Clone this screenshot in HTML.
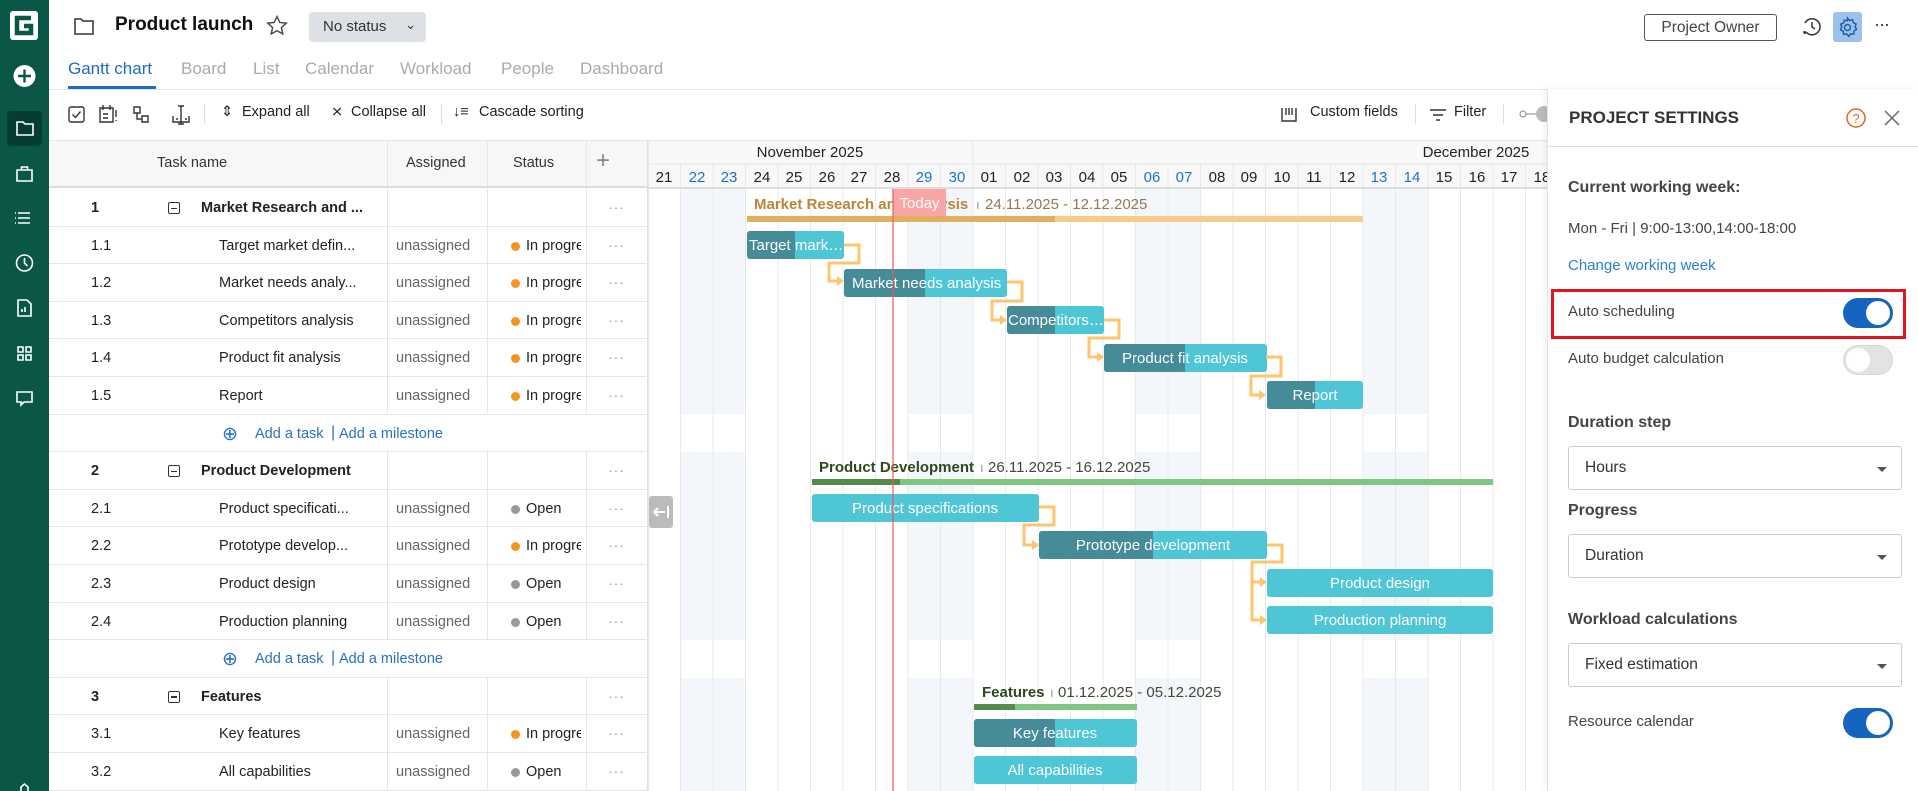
<!DOCTYPE html>
<html><head><meta charset="utf-8">
<style>
*{box-sizing:border-box;margin:0;padding:0}
body{width:1918px;height:791px;overflow:hidden;position:relative;background:#fff;font-family:"Liberation Sans",sans-serif;color:#222}
.a{position:absolute}
.sb{left:0;top:0;width:49px;height:791px;background:#0a5747}
.tab{top:59px;font-size:17px;color:#aaa}
.tb{top:104px;font-size:14.5px;color:#222}
.row{position:absolute;left:49px;width:599px;height:37.6px;border-bottom:1px solid #e6e6e6;font-size:14.5px}
.row span{position:absolute;top:11px;white-space:nowrap}
.cl{position:absolute;top:0;height:100%;width:1px;background:#e6e6e6}
.num{left:42px}
.nm{left:170px}
.gn{left:152px;font-weight:bold}
.as{left:347px;color:#666}
.dot{width:9px;height:9px;border-radius:50%;top:15px!important}
.st{left:477px;width:55px;overflow:hidden}
.dd{left:559px;color:#999;letter-spacing:1px;top:10px!important;font-size:14px}
.bx{left:119px;top:13px!important;width:12px;height:12px;border:1.3px solid #333;border-radius:2px}
.bx:after{content:"";position:absolute;left:2px;top:4.5px;width:6px;height:1.3px;background:#333}
.add{color:#2770c8}
.pl{font-size:15px;color:#444}
.lbl{font-weight:bold;font-size:16px;color:#444}
.sel{left:1568px;width:334px;height:44px;border:1px solid #ccc;border-radius:3px;font-size:15.5px;color:#333;padding:12px 16px}
.sel:after{content:"";position:absolute;right:14px;top:20px;border-left:5px solid transparent;border-right:5px solid transparent;border-top:5px solid #555}
.tg{width:50px;height:30px;border-radius:15px;left:1843px}
.tg i{position:absolute;top:3px;width:24px;height:24px;border-radius:50%;background:#fff}
</style></head><body>

<svg class="a" style="left:0;top:0" width="1918" height="791" font-family="Liberation Sans, sans-serif">
<rect x="648" y="140" width="900" height="48" fill="#f8f8f8"/>
<g fill="#f3f7fb">
<rect x="680.5" y="189" width="65" height="225"/><rect x="908" y="189" width="65" height="225"/><rect x="1135.5" y="189" width="65" height="225"/><rect x="1363" y="189" width="65" height="225"/>
<rect x="680.5" y="452" width="65" height="188"/><rect x="908" y="452" width="65" height="188"/><rect x="1135.5" y="452" width="65" height="188"/><rect x="1363" y="452" width="65" height="188"/>
<rect x="680.5" y="678" width="65" height="113"/><rect x="908" y="678" width="65" height="113"/><rect x="1135.5" y="678" width="65" height="113"/><rect x="1363" y="678" width="65" height="113"/>
</g>
<line x1="648" y1="164" x2="1548" y2="164" stroke="#e6e6e6"/>
<line x1="973" y1="140" x2="973" y2="164" stroke="#e6e6e6"/>
<g stroke="#e8e8e8" stroke-width="1">
<line x1="648.5" y1="140" x2="648.5" y2="791"/><line x1="680.5" y1="164" x2="680.5" y2="791"/><line x1="713" y1="164" x2="713" y2="791"/><line x1="745.5" y1="164" x2="745.5" y2="791"/><line x1="778" y1="164" x2="778" y2="791"/><line x1="810.5" y1="164" x2="810.5" y2="791"/><line x1="843" y1="164" x2="843" y2="791"/><line x1="875.5" y1="164" x2="875.5" y2="791"/><line x1="908" y1="164" x2="908" y2="791"/><line x1="940.5" y1="164" x2="940.5" y2="791"/><line x1="973" y1="164" x2="973" y2="791"/><line x1="1005.5" y1="164" x2="1005.5" y2="791"/><line x1="1038" y1="164" x2="1038" y2="791"/><line x1="1070.5" y1="164" x2="1070.5" y2="791"/><line x1="1103" y1="164" x2="1103" y2="791"/><line x1="1135.5" y1="164" x2="1135.5" y2="791"/><line x1="1168" y1="164" x2="1168" y2="791"/><line x1="1200.5" y1="164" x2="1200.5" y2="791"/><line x1="1233" y1="164" x2="1233" y2="791"/><line x1="1265.5" y1="164" x2="1265.5" y2="791"/><line x1="1298" y1="164" x2="1298" y2="791"/><line x1="1330.5" y1="164" x2="1330.5" y2="791"/><line x1="1363" y1="164" x2="1363" y2="791"/><line x1="1395.5" y1="164" x2="1395.5" y2="791"/><line x1="1428" y1="164" x2="1428" y2="791"/><line x1="1460.5" y1="164" x2="1460.5" y2="791"/><line x1="1493" y1="164" x2="1493" y2="791"/><line x1="1525.5" y1="164" x2="1525.5" y2="791"/>
</g>
<line x1="648" y1="188" x2="1548" y2="188" stroke="#ddd" stroke-width="2"/>
<text x="810" y="157" font-size="15" text-anchor="middle" fill="#222">November 2025</text>
<text x="1476" y="157" font-size="15" text-anchor="middle" fill="#222">December 2025</text>
<g font-size="15" text-anchor="middle" fill="#222">
<text x="664" y="182">21</text><text x="697" y="182" fill="#1f6fd0">22</text><text x="729" y="182" fill="#1f6fd0">23</text><text x="762" y="182">24</text><text x="794" y="182">25</text><text x="827" y="182">26</text><text x="859" y="182">27</text><text x="892" y="182">28</text><text x="924" y="182" fill="#1f6fd0">29</text><text x="957" y="182" fill="#1f6fd0">30</text><text x="989" y="182">01</text><text x="1022" y="182">02</text><text x="1054" y="182">03</text><text x="1087" y="182">04</text><text x="1119" y="182">05</text><text x="1152" y="182" fill="#1f6fd0">06</text><text x="1184" y="182" fill="#1f6fd0">07</text><text x="1217" y="182">08</text><text x="1249" y="182">09</text><text x="1282" y="182">10</text><text x="1314" y="182">11</text><text x="1347" y="182">12</text><text x="1379" y="182" fill="#1f6fd0">13</text><text x="1412" y="182" fill="#1f6fd0">14</text><text x="1444" y="182">15</text><text x="1477" y="182">16</text><text x="1509" y="182">17</text><text x="1542" y="182">18</text>
</g>

<text x="754" y="209" font-size="15" font-weight="bold" fill="#b8863b">Market Research and analysis</text>
<text x="976" y="209" font-size="13" fill="#999">ı</text>
<text x="985" y="209" font-size="15" fill="#8f7a55">24.11.2025 - 12.12.2025</text>
<rect x="747" y="216" width="616" height="6" fill="#f8cc88"/>
<rect x="747" y="216" width="308" height="6" fill="#e0b060"/>
<rect x="893" y="189" width="53" height="27" fill="#f9a5a5"/>
<text x="919.5" y="208" font-size="15" text-anchor="middle" fill="#fff">Today</text>

<g font-size="15" fill="#fff">
<rect x="747" y="231" width="97" height="28" rx="3" fill="#4fc6d6"/><path d="M750 231h45v28h-45a3 3 0 0 1-3-3v-22a3 3 0 0 1 3-3z" fill="#458b98"/>
<text x="749" y="250">Target mark…</text>
<rect x="844" y="269" width="163" height="28" rx="3" fill="#4fc6d6"/><path d="M847 269h78v28h-78a3 3 0 0 1-3-3v-22a3 3 0 0 1 3-3z" fill="#458b98"/>
<text x="852" y="288">Market needs analysis</text>
<rect x="1007" y="306" width="97" height="28" rx="3" fill="#4fc6d6"/><path d="M1010 306h45v28h-45a3 3 0 0 1-3-3v-22a3 3 0 0 1 3-3z" fill="#458b98"/>
<text x="1008" y="325">Competitors…</text>
<rect x="1104" y="344" width="163" height="28" rx="3" fill="#4fc6d6"/><path d="M1107 344h78v28h-78a3 3 0 0 1-3-3v-22a3 3 0 0 1 3-3z" fill="#458b98"/>
<text x="1185" y="363" text-anchor="middle">Product fit analysis</text>
<rect x="1267" y="381" width="96" height="28" rx="3" fill="#4fc6d6"/><path d="M1270 381h45v28h-45a3 3 0 0 1-3-3v-22a3 3 0 0 1 3-3z" fill="#458b98"/>
<text x="1315" y="400" text-anchor="middle">Report</text>
</g>

<text x="819" y="472" font-size="15" font-weight="bold" fill="#2b4a1a">Product Development</text>
<text x="980" y="472" font-size="13" fill="#999">ı</text>
<text x="988" y="472" font-size="15" fill="#3b4b35">26.11.2025 - 16.12.2025</text>
<rect x="812" y="479" width="681" height="6" fill="#80c683"/>
<rect x="812" y="479" width="88" height="6" fill="#558b4a"/>
<g font-size="15" fill="#fff">
<rect x="812" y="494" width="227" height="28" rx="3" fill="#4fc6d6"/>
<text x="925" y="513" text-anchor="middle">Product specifications</text>
<rect x="1039" y="531" width="228" height="28" rx="3" fill="#4fc6d6"/><path d="M1042 531h111v28h-111a3 3 0 0 1-3-3v-22a3 3 0 0 1 3-3z" fill="#458b98"/>
<text x="1153" y="550" text-anchor="middle">Prototype development</text>
<rect x="1267" y="569" width="226" height="28" rx="3" fill="#4fc6d6"/>
<text x="1380" y="588" text-anchor="middle">Product design</text>
<rect x="1267" y="606" width="226" height="28" rx="3" fill="#4fc6d6"/>
<text x="1380" y="625" text-anchor="middle">Production planning</text>
</g>

<text x="982" y="697" font-size="15" font-weight="bold" fill="#2b4a1a">Features</text>
<text x="1050" y="697" font-size="13" fill="#999">ı</text>
<text x="1058" y="697" font-size="15" fill="#3b4b35">01.12.2025 - 05.12.2025</text>
<rect x="974" y="704" width="163" height="6" fill="#80c683"/>
<rect x="974" y="704" width="41" height="6" fill="#558b4a"/>
<g font-size="15" fill="#fff">
<rect x="974" y="719" width="163" height="28" rx="3" fill="#4fc6d6"/><path d="M977 719h78v28h-78a3 3 0 0 1-3-3v-22a3 3 0 0 1 3-3z" fill="#458b98"/>
<text x="1055" y="738" text-anchor="middle">Key features</text>
<rect x="974" y="756" width="163" height="28" rx="3" fill="#4fc6d6"/>
<text x="1055" y="775" text-anchor="middle">All capabilities</text>
</g>

<g fill="none" stroke="#ffc56e" stroke-width="3">
<path d="M844 245H859V263H829V281H838"/>
<path d="M1007 282H1022V301H992V320H1001"/>
<path d="M1104 320H1119V338H1089V357H1098"/>
<path d="M1266 357H1281V376H1251V395H1260"/>
<path d="M1039 507H1054V525H1024V545H1033"/>
<path d="M1267 545H1282V562H1252V620H1261M1252 582H1261"/>
</g>
<g fill="#ffc56e">
<path d="M837 276l7 5-7 5z"/><path d="M1000 315l7 5-7 5z"/><path d="M1097 352l7 5-7 5z"/><path d="M1259 390l7 5-7 5z"/><path d="M1032 540l7 5-7 5z"/><path d="M1260 577l7 5-7 5z"/><path d="M1260 615l7 5-7 5z"/>
</g>
<line x1="893" y1="189" x2="893" y2="791" stroke="#e85a5a" stroke-width="1.2"/>
<rect x="649" y="496" width="24" height="32" rx="3" fill="#bbb"/>
<path d="M654 512h11M654 512l4-4M654 512l4 4M668 506v12" stroke="#fff" stroke-width="2" fill="none"/>
</svg>

<div class="a sb"></div>
<svg class="a" style="left:0;top:0" width="49" height="791" fill="none" stroke="#fff" stroke-width="1.6">
<rect x="10" y="11" width="28" height="29" rx="3" fill="#fff" stroke="none"/>
<path d="M31 18H17V33H31V26H24" stroke="#0a5747" stroke-width="4.5" fill="none"/>
<circle cx="24.5" cy="76" r="11" fill="#fff" stroke="none"/>
<path d="M24.5 69.5v13M18 76h13" stroke="#0a5747" stroke-width="2.4"/>
<rect x="7" y="111" width="35" height="35" rx="4" fill="#063d33" stroke="none"/>
<path d="M17 122h6l2 2h8v11H17z"/>
<path d="M17 170h15v11H17zM21.5 170v-3h6v3"/>
<path d="M18 213h12M18 218h12M18 223h12M15 213h1M15 218h1M15 223h1"/>
<circle cx="24.5" cy="263" r="8"/><path d="M24.5 258v5l3 3"/>
<path d="M18 300h9l4 4v12H18zM22 312v-3M25 312v-5"/>
<path d="M18 347h5v5h-5zM26 347h5v5h-5zM18 355h5v5h-5zM26 355h5v5h-5z"/>
<path d="M17 392h15v10h-8l-3 3v-3h-4z"/>
<path d="M21 791v-4l3.5-3 3.5 3v4"/>
</svg>

<svg class="a" style="left:74px;top:17px" width="20" height="18" fill="none" stroke="#333" stroke-width="1.5"><path d="M1 2h6l2 2h10v13H1z"/></svg>
<div class="a" style="left:115px;top:14px;font-size:19px;font-weight:bold;color:#111">Product launch</div>
<svg class="a" style="left:266px;top:15px" width="22" height="22" fill="none" stroke="#444" stroke-width="1.4"><path d="M11 1.5l2.8 6 6.5.7-4.9 4.4 1.4 6.4L11 15.7 5.2 19l1.4-6.4L1.7 8.2l6.5-.7z"/></svg>
<div class="a" style="left:309px;top:12px;width:117px;height:30px;background:#dde0e5;border-radius:4px;font-size:15px;color:#333;padding:6px 14px">No status<span style="position:absolute;right:10px;top:5px;font-size:13px">&#8964;</span></div>
<div class="a" style="left:1644px;top:14px;width:133px;height:27px;border:1px solid #555;border-radius:3px;font-size:15.5px;color:#444;text-align:center;line-height:25px">Project Owner</div>
<svg class="a" style="left:1800px;top:15px" width="24" height="24" fill="none" stroke="#333" stroke-width="1.5"><path d="M6 17a8 8 0 1 0-1-9M6 17l-2 2M6 17h-3"/><path d="M12 7v5l3 2"/></svg>
<div class="a" style="left:1833px;top:12px;width:29px;height:30px;background:#9cc2ea;border-radius:3px"></div>
<svg class="a" style="left:1836px;top:16px" width="23" height="23" fill="none" stroke="#1d5fae" stroke-width="1.5"><circle cx="11.5" cy="11.5" r="3"/><path d="M11.5 2l2 2.5 3-.8.8 3 2.8 1.3-1 2.8 1.5 2.6-2.6 1.5-.2 3.2-3.1-.3-1.9 2.5-2-2.4-3.1.4-.5-3.1-2.7-1.4 1.3-2.8-1.1-2.9 2.9-1 .8-3 3 .6z"/></svg>
<div class="a" style="left:1874px;top:14px;font-size:18px;color:#333;letter-spacing:-1px">···</div>

<div class="a tab" style="left:68px;color:#1d6bc6">Gantt chart</div>
<div class="a" style="left:68px;top:86px;width:88px;height:3px;background:#1d6bc6"></div>
<div class="a tab" style="left:181px">Board</div>
<div class="a tab" style="left:253px">List</div>
<div class="a tab" style="left:305px">Calendar</div>
<div class="a tab" style="left:400px">Workload</div>
<div class="a tab" style="left:501px">People</div>
<div class="a tab" style="left:580px">Dashboard</div>
<div class="a" style="left:49px;top:89px;width:1869px;height:1px;background:#e6e6e6"></div>

<svg class="a" style="left:60px;top:102px" width="160" height="26" fill="none" stroke="#333" stroke-width="1.4">
<rect x="9" y="5" width="15" height="15" rx="2"/><path d="M12.5 12.5l3 3 5-6"/>
<path d="M40 6h13v14H40zM43 3v5M50 3v5M43 12h5M43 16h5M56 8v7M56 18v1"/>
<path d="M74 5h6v6h-6zM82 14h6v6h-6zM77 11v6h5"/>
<path d="M113 14v6h16v-6M121 4v18M118 4h6M118 22h6M116 17h2M125 17h2"/>
</svg>
<div class="a" style="left:204px;top:104px;width:1px;height:20px;background:#ddd"></div>
<div class="a tb" style="left:221px">&#8661;</div>
<div class="a tb" style="left:242px">Expand all</div>
<div class="a tb" style="left:331px">&#10799;</div>
<div class="a tb" style="left:351px">Collapse all</div>
<div class="a" style="left:441px;top:104px;width:1px;height:20px;background:#ddd"></div>
<div class="a tb" style="left:453px">&#8595;&#8801;</div>
<div class="a tb" style="left:479px">Cascade sorting</div>
<svg class="a" style="left:1279px;top:104px" width="20" height="20" fill="none" stroke="#333" stroke-width="1.4"><path d="M3 4v13h14V4M7 4v7M10 4v7M13 4v7"/></svg>
<div class="a tb" style="left:1310px">Custom fields</div>
<div class="a" style="left:1415px;top:104px;width:1px;height:20px;background:#ddd"></div>
<svg class="a" style="left:1428px;top:105px" width="20" height="18" stroke="#333" stroke-width="1.5"><path d="M2 5h16M5 10h10M8 15h4"/></svg>
<div class="a tb" style="left:1454px">Filter</div>
<div class="a" style="left:1503px;top:104px;width:1px;height:20px;background:#ddd"></div>
<svg class="a" style="left:1518px;top:105px" width="30" height="18"><circle cx="5" cy="9" r="3" fill="none" stroke="#888"/><path d="M8 9h10" stroke="#888"/><circle cx="26" cy="9" r="8" fill="#bbb"/></svg>
<div class="a" style="left:49px;top:140px;width:1498px;height:1px;background:#e6e6e6"></div>

<div class="a" style="left:49px;top:141px;width:599px;height:47px;background:#f7f7f7;border-bottom:2px solid #ddd;font-size:14.5px;color:#333">
<span class="a" style="left:108px;top:14px">Task name</span>
<span class="a" style="left:357px;top:14px">Assigned</span>
<span class="a" style="left:464px;top:14px">Status</span>
<span class="a" style="left:547px;top:6px;font-size:24px;color:#888;font-weight:300">+</span>
<i class="cl" style="left:338px"></i><i class="cl" style="left:438px"></i><i class="cl" style="left:537px"></i>
</div>
<div class="a" style="left:647px;top:140px;width:1px;height:651px;background:#e0e0e0"></div>

<div class="row" style="top:189px"><span class="num" style="font-weight:bold">1</span><span class="bx"></span><span class="gn">Market Research and ...</span><span class="dd">···</span><i class="cl" style="left:338px"></i><i class="cl" style="left:438px"></i><i class="cl" style="left:537px"></i></div>
<div class="row" style="top:226.6px"><span class="num">1.1</span><span class="nm">Target market defin...</span><span class="as">unassigned</span><span class="dot" style="left:462px;background:#f7941d"></span><span class="st">In progress</span><span class="dd">···</span><i class="cl" style="left:338px"></i><i class="cl" style="left:438px"></i><i class="cl" style="left:537px"></i></div>
<div class="row" style="top:264.2px"><span class="num">1.2</span><span class="nm">Market needs analy...</span><span class="as">unassigned</span><span class="dot" style="left:462px;background:#f7941d"></span><span class="st">In progress</span><span class="dd">···</span><i class="cl" style="left:338px"></i><i class="cl" style="left:438px"></i><i class="cl" style="left:537px"></i></div>
<div class="row" style="top:301.8px"><span class="num">1.3</span><span class="nm">Competitors analysis</span><span class="as">unassigned</span><span class="dot" style="left:462px;background:#f7941d"></span><span class="st">In progress</span><span class="dd">···</span><i class="cl" style="left:338px"></i><i class="cl" style="left:438px"></i><i class="cl" style="left:537px"></i></div>
<div class="row" style="top:339.4px"><span class="num">1.4</span><span class="nm">Product fit analysis</span><span class="as">unassigned</span><span class="dot" style="left:462px;background:#f7941d"></span><span class="st">In progress</span><span class="dd">···</span><i class="cl" style="left:338px"></i><i class="cl" style="left:438px"></i><i class="cl" style="left:537px"></i></div>
<div class="row" style="top:377px"><span class="num">1.5</span><span class="nm">Report</span><span class="as">unassigned</span><span class="dot" style="left:462px;background:#f7941d"></span><span class="st">In progress</span><span class="dd">···</span><i class="cl" style="left:338px"></i><i class="cl" style="left:438px"></i><i class="cl" style="left:537px"></i></div>
<div class="row" style="top:414.6px"><span class="add" style="left:173px;top:8px;font-size:19px">&#8853;</span><span class="add" style="left:206px">Add a task</span><span class="add" style="left:282px;top:9px;font-size:16px">|</span><span class="add" style="left:290px">Add a milestone</span></div>
<div class="row" style="top:452.2px"><span class="num" style="font-weight:bold">2</span><span class="bx"></span><span class="gn">Product Development</span><span class="dd">···</span><i class="cl" style="left:338px"></i><i class="cl" style="left:438px"></i><i class="cl" style="left:537px"></i></div>
<div class="row" style="top:489.8px"><span class="num">2.1</span><span class="nm">Product specificati...</span><span class="as">unassigned</span><span class="dot" style="left:462px;background:#999"></span><span class="st">Open</span><span class="dd">···</span><i class="cl" style="left:338px"></i><i class="cl" style="left:438px"></i><i class="cl" style="left:537px"></i></div>
<div class="row" style="top:527.4px"><span class="num">2.2</span><span class="nm">Prototype develop...</span><span class="as">unassigned</span><span class="dot" style="left:462px;background:#f7941d"></span><span class="st">In progress</span><span class="dd">···</span><i class="cl" style="left:338px"></i><i class="cl" style="left:438px"></i><i class="cl" style="left:537px"></i></div>
<div class="row" style="top:565px"><span class="num">2.3</span><span class="nm">Product design</span><span class="as">unassigned</span><span class="dot" style="left:462px;background:#999"></span><span class="st">Open</span><span class="dd">···</span><i class="cl" style="left:338px"></i><i class="cl" style="left:438px"></i><i class="cl" style="left:537px"></i></div>
<div class="row" style="top:602.6px"><span class="num">2.4</span><span class="nm">Production planning</span><span class="as">unassigned</span><span class="dot" style="left:462px;background:#999"></span><span class="st">Open</span><span class="dd">···</span><i class="cl" style="left:338px"></i><i class="cl" style="left:438px"></i><i class="cl" style="left:537px"></i></div>
<div class="row" style="top:640.2px"><span class="add" style="left:173px;top:8px;font-size:19px">&#8853;</span><span class="add" style="left:206px">Add a task</span><span class="add" style="left:282px;top:9px;font-size:16px">|</span><span class="add" style="left:290px">Add a milestone</span></div>
<div class="row" style="top:677.8px"><span class="num" style="font-weight:bold">3</span><span class="bx"></span><span class="gn">Features</span><span class="dd">···</span><i class="cl" style="left:338px"></i><i class="cl" style="left:438px"></i><i class="cl" style="left:537px"></i></div>
<div class="row" style="top:715.4px"><span class="num">3.1</span><span class="nm">Key features</span><span class="as">unassigned</span><span class="dot" style="left:462px;background:#f7941d"></span><span class="st">In progress</span><span class="dd">···</span><i class="cl" style="left:338px"></i><i class="cl" style="left:438px"></i><i class="cl" style="left:537px"></i></div>
<div class="row" style="top:753px"><span class="num">3.2</span><span class="nm">All capabilities</span><span class="as">unassigned</span><span class="dot" style="left:462px;background:#999"></span><span class="st">Open</span><span class="dd">···</span><i class="cl" style="left:338px"></i><i class="cl" style="left:438px"></i><i class="cl" style="left:537px"></i></div>

<div class="a" style="left:1547px;top:89px;width:371px;height:702px;background:#fff;border-left:1px solid #e3e3e3;box-shadow:-2px 0 6px rgba(0,0,0,0.06)"></div>
<div class="a" style="left:1548px;top:146px;width:370px;height:1px;background:#ddd"></div>
<div class="a" style="left:1569px;top:108px;font-size:17px;font-weight:bold;color:#333">PROJECT SETTINGS</div>
<svg class="a" style="left:1845px;top:107px" width="22" height="22" fill="none" stroke="#e8631a" stroke-width="1.5"><circle cx="11" cy="11" r="9"/><text x="11" y="16" font-size="13" text-anchor="middle" fill="#e8631a" stroke="none" font-family="Liberation Sans">?</text></svg>
<svg class="a" style="left:1884px;top:110px" width="16" height="16" stroke="#666" stroke-width="1.5"><path d="M1 1l14 14M15 1L1 15"/></svg>

<div class="a lbl" style="left:1568px;top:179px">Current working week:</div>
<div class="a pl" style="left:1568px;top:220px">Mon - Fri | 9:00-13:00,14:00-18:00</div>
<div class="a pl" style="left:1568px;top:257px;color:#2b7fd4">Change working week</div>
<div class="a" style="left:1551px;top:289px;width:355px;height:50px;border:3px solid #e4141e"></div>
<div class="a pl" style="left:1568px;top:303px">Auto scheduling</div>
<div class="a tg" style="top:298px;background:#1565c0"><i style="left:23px"></i></div>
<div class="a pl" style="left:1568px;top:350px">Auto budget calculation</div>
<div class="a tg" style="top:345px;background:#e3e3e3;border:1px solid #d6d6d6"><i style="left:2px;top:2px"></i></div>
<div class="a lbl" style="left:1568px;top:414px">Duration step</div>
<div class="a sel" style="top:446px">Hours</div>
<div class="a lbl" style="left:1568px;top:502px">Progress</div>
<div class="a sel" style="top:534px">Duration</div>
<div class="a lbl" style="left:1568px;top:611px">Workload calculations</div>
<div class="a sel" style="top:643px">Fixed estimation</div>
<div class="a pl" style="left:1568px;top:713px">Resource calendar</div>
<div class="a tg" style="top:708px;background:#1565c0"><i style="left:23px"></i></div>
</body></html>
